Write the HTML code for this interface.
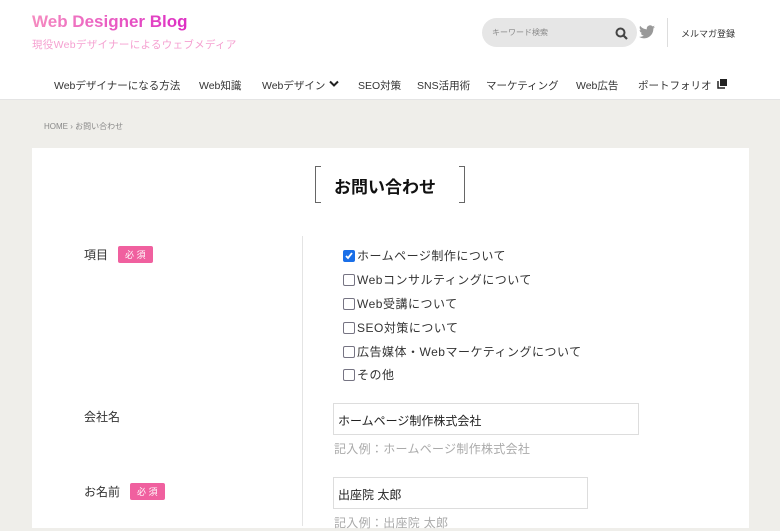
<!DOCTYPE html>
<html><head><meta charset="utf-8"><style>
*{margin:0;padding:0;box-sizing:border-box}
body{width:780px;height:520px;overflow:hidden;background:#efeeea;font-family:"Liberation Sans","Noto Sans CJK JP",sans-serif;color:#333;position:relative}
.hdr{position:absolute;left:0;top:0;width:780px;height:100px;background:#fff;border-bottom:1px solid #e4e4e4}
.abs{position:absolute;white-space:nowrap}
.logo{left:32px;top:12px;font-size:17px;font-weight:bold;background:linear-gradient(90deg,#f58bc0,#dd2ec4);-webkit-background-clip:text;color:transparent}
.sub{left:32px;top:37px;font-size:10.5px;color:#f59fd0;letter-spacing:.3px}
.search{left:482px;top:18px;width:155px;height:29px;border-radius:15px;background:#e6e6e6;font-size:8px;color:#888;padding:9px 0 0 10px}
.nav{top:78px;font-size:10.5px;color:#333;letter-spacing:0}
.card{position:absolute;left:32px;top:148px;width:717px;height:380px;background:#fff}
.lbl{font-size:12px;color:#333}
.req{display:inline-block;background:#f0609f;color:#fff;font-size:9px;padding:2px 7px;border-radius:2px;margin-left:10px;vertical-align:1px}
.cb{left:343px;font-size:12px;letter-spacing:.5px;color:#333}
.cb i{display:inline-block;width:12px;height:12px;border:1.5px solid #767483;border-radius:2px;vertical-align:-2px;margin-right:2px;background:#fff}
.cb i.on{background:#1a6fe8;border-color:#1a6fe8;position:relative}
.inp{border:1px solid #ddd;height:32px;font-size:12px;padding:8px 4px;color:#222}
.hint{font-size:12px;color:#aaa;letter-spacing:.3px}
</style></head><body>
<div class="hdr"></div>
<div class="abs logo">Web Designer Blog</div>
<div class="abs sub">現役Webデザイナーによるウェブメディア</div>
<div class="abs search">キーワード検索</div>
<svg class="abs" style="left:615px;top:27px" width="13" height="13" viewBox="0 0 13 13"><circle cx="5.5" cy="5.5" r="4" fill="none" stroke="#444" stroke-width="2"/><path d="M8.5 8.5L12 12" stroke="#444" stroke-width="2.2"/></svg>
<svg class="abs" style="left:639px;top:25px" width="16" height="14" viewBox="0 0 24 20"><path d="M24 2.4a10 10 0 0 1-2.8.8A5 5 0 0 0 23.3.4a10 10 0 0 1-3.1 1.2A4.9 4.9 0 0 0 11.8 6 14 14 0 0 1 1.7.9a4.9 4.9 0 0 0 1.5 6.6A4.9 4.9 0 0 1 1 6.9a4.9 4.9 0 0 0 3.9 4.8 5 5 0 0 1-2.2.1 4.9 4.9 0 0 0 4.6 3.4A9.9 9.9 0 0 1 0 17.3 14 14 0 0 0 7.5 19.5c9 0 14-7.5 14-14v-.6A10 10 0 0 0 24 2.4z" fill="#999"/></svg>
<div class="abs" style="left:667px;top:18px;width:1px;height:29px;background:#ddd"></div>
<div class="abs" style="left:681px;top:27px;font-size:9px;color:#333">メルマガ登録</div>
<div class="abs nav" style="left:54px">Webデザイナーになる方法</div>
<div class="abs nav" style="left:199px">Web知識</div>
<div class="abs nav" style="left:262px">Webデザイン</div>
<svg class="abs" style="left:329px;top:80px" width="10" height="8" viewBox="0 0 10 8"><path d="M1 1.5L5 5.5 9 1.5" fill="none" stroke="#222" stroke-width="2"/></svg>
<div class="abs nav" style="left:358px">SEO対策</div>
<div class="abs nav" style="left:417px">SNS活用術</div>
<div class="abs nav" style="left:486px">マーケティング</div>
<div class="abs nav" style="left:576px">Web広告</div>
<div class="abs nav" style="left:638px">ポートフォリオ</div>
<svg class="abs" style="left:717px;top:79px" width="10" height="10" viewBox="0 0 10 10"><rect x="3" y="0" width="7" height="7" fill="#222"/><path d="M1 2v7h7" fill="none" stroke="#222" stroke-width="1.5"/></svg>
<div class="abs" style="left:44px;top:121px;font-size:8px;color:#888">HOME › お問い合わせ</div>
<div class="card"></div>
<div class="abs" style="left:315px;top:166px;width:6px;height:37px;border:1.5px solid #666;border-right:none"></div>
<div class="abs" style="left:459px;top:166px;width:6px;height:37px;border:1.5px solid #666;border-left:none"></div>
<div class="abs" style="left:334px;top:173px;font-size:17px;font-weight:bold;color:#111">お問い合わせ</div>
<div class="abs" style="left:302px;top:236px;width:1px;height:290px;background:#e4e4e4"></div>
<div class="abs lbl" style="left:84px;top:246px">項目<span class="req">必 須</span></div>
<div class="abs cb" style="top:247px"><i class="on"><svg style="position:absolute;left:0;top:0" width="10" height="10" viewBox="0 0 10 10"><path d="M2 5l2 2 4-5" fill="none" stroke="#fff" stroke-width="1.8"/></svg></i>ホームページ制作について</div>
<div class="abs cb" style="top:271px"><i></i>Webコンサルティングについて</div>
<div class="abs cb" style="top:295px"><i></i>Web受講について</div>
<div class="abs cb" style="top:319px"><i></i>SEO対策について</div>
<div class="abs cb" style="top:343px"><i></i>広告媒体・Webマーケティングについて</div>
<div class="abs cb" style="top:366px"><i></i>その他</div>
<div class="abs lbl" style="left:84px;top:408px">会社名</div>
<div class="abs inp" style="left:333px;top:403px;width:306px">ホームページ制作株式会社</div>
<div class="abs hint" style="left:334px;top:440px">記入例：ホームページ制作株式会社</div>
<div class="abs lbl" style="left:84px;top:483px">お名前<span class="req">必 須</span></div>
<div class="abs inp" style="left:333px;top:477px;width:255px">出座院 太郎</div>
<div class="abs hint" style="left:334px;top:514px">記入例：出座院 太郎</div>
</body></html>
